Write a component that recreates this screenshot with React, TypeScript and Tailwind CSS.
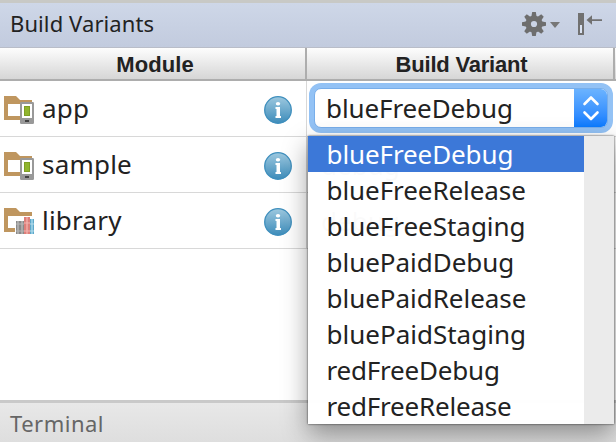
import React from "react";

const variants = [
  { name: "blueFreeDebug", tracking: "tracking-[-0.1px]" },
  { name: "blueFreeRelease", tracking: "tracking-[-0.07px]" },
  { name: "blueFreeStaging", tracking: "tracking-[-0.03px]" },
  { name: "bluePaidDebug", tracking: "tracking-[-0.03px]" },
  { name: "bluePaidRelease", tracking: "tracking-[-0.03px]" },
  { name: "bluePaidStaging", tracking: "tracking-[0px]" },
  { name: "redFreeDebug", tracking: "tracking-[-0.2px]" },
  { name: "redFreeRelease", tracking: "tracking-[-0.2px]" },
];

const modules = [
  { name: "app", kind: "phone" },
  { name: "sample", kind: "phone" },
  { name: "library", kind: "books" },
];

function ModuleIcon({ kind }: { kind: string }) {
  return (
    <svg width="32" height="32" viewBox="0 0 32 32" className="mt-[3px] shrink-0">
      <path d="M0 2h12l4 4h12v20H0z" fill="#bf965f" />
      <path d="M4 10h24v12H4z" fill="#fff" />
      {kind === "phone" ? (
        <g>
          <rect x="16" y="8" width="14" height="22" rx="1.2" fill="#999" />
          <rect x="18" y="10" width="10" height="14" fill="#fff" />
          <rect x="20" y="12" width="6" height="10" fill="#7f9f24" />
          <rect x="21" y="13" width="4" height="8" fill="#91b52e" />
          <rect x="21" y="26" width="4" height="2" fill="#444" />
        </g>
      ) : (
        <g>
          <path d="M11 14h8v-4h8v2h5v16H11z" fill="#fff" />
          <rect x="12" y="15" width="8" height="13" fill="#8a8a8a" />
          <path d="M13 15h2v13h-2zM17 15h2v13h-2z" fill="#aaa" />
          <path d="M12 18h8M12 25h8" stroke="#b5b5b5" />
          <rect x="20" y="11" width="6" height="17" fill="#dd7f7a" />
          <path d="M22 11h2v17h-2z" fill="#ed9f9a" />
          <path d="M20 17h6M20 25h6" stroke="#f2b4b0" />
          <rect x="26" y="13" width="4" height="15" fill="#5ea7c9" />
          <path d="M27 13h2v15h-2z" fill="#91cbe3" />
          <path d="M26 18h4M26 25h4" stroke="#b4dbea" />
        </g>
      )}
    </svg>
  );
}

function InfoIcon() {
  return (
    <svg width="28" height="28" viewBox="0 0 28 28" className="mt-[3px] ml-auto shrink-0">
      <defs>
        <linearGradient id="info" x1="0" y1="0" x2="0" y2="1">
          <stop offset="0" stopColor="#9dc8df" />
          <stop offset="1" stopColor="#3d8cba" />
        </linearGradient>
      </defs>
      <circle cx="14" cy="14" r="13.3" fill="url(#info)" stroke="#3f8fbd" strokeWidth="1.3" />
      <ellipse cx="14" cy="7.7" rx="2.2" ry="1.7" fill="#fff" />
      <path d="M11.500 11h4.500v9h1v2h-5.500v-2h1v-7h-1z" fill="#fff" />
    </svg>
  );
}

function Gear() {
  return (
    <svg width="24" height="24" viewBox="0 0 24 24">
      <g fill="#6e6e6e">
        {[0, 45, 90, 135].map((angle) => (
          <path key={angle} d="M10.200 0h3.600l.9 5v14l-.9 5h-3.600l-.9-5V5z" transform={`rotate(${angle} 12 12)`} />
        ))}
        <circle cx="12" cy="12" r="8.6" />
      </g>
      <circle cx="12" cy="12" r="3.1" fill="#cbd4e6" />
    </svg>
  );
}

export default function App() {
  return (
    <div className="relative flex h-[442px] w-[616px] flex-col overflow-hidden bg-white font-['Noto_Sans',sans-serif] text-[#222]">
      <header className="flex h-12 shrink-0 items-center border-t-[3px] border-b border-t-[#c8c9c6] border-b-[#b9bdc8] bg-linear-to-b from-[#ced7e8] to-[#c2cbde] pl-[10px]">
        <span className="-mt-[4px] text-[22px] leading-none tracking-[0.1px]">Build Variants</span>
        <div className="-mt-[2px] ml-auto flex items-center pr-[14px]">
          <Gear />
          <svg width="10" height="6" viewBox="0 0 10 6" className="mt-[2px] ml-[4px]">
            <path d="M0 0h10L5 6z" fill="#777" />
          </svg>
          <svg width="24" height="22" viewBox="0 0 24 22" className="ml-[18px]">
            <path d="M0 0h6v22H0z" fill="#717171" />
            <path d="M2 12h2v8H2z" fill="#dae2f1" />
            <path d="M8.500 7L14 2.200v4H24v1.800H14v3.800z" fill="#717171" />
          </svg>
        </div>
      </header>
      <div className="flex h-[33px] shrink-0 border-b-2 border-[#adadad] bg-linear-to-b from-[#fdfdfd] to-[#d6d6d6] font-['Liberation_Sans',sans-serif] text-[22px] leading-[33px] font-bold">
        <div className="w-[307px] border-r-2 border-[#adadad] pl-[5px] text-center tracking-[0.1px]">Module</div>
        <div className="w-[308px] border-r-2 border-[#adadad] pl-[3px] text-center tracking-[-0.2px]">Build Variant</div>
      </div>
      <main className="min-h-0 flex-1">
        {modules.map((module, index) => (
          <div key={module.name} className="flex h-14 border-b border-[#d8d8d8]">
            <div className="flex w-[307px] items-center border-r border-[#d8d8d8] pr-[14px] pl-1">
              <ModuleIcon kind={module.kind} />
              <span className="-mt-[2px] ml-[6px] text-[26px] leading-none tracking-[0.2px]">{module.name}</span>
              <InfoIcon />
            </div>
            {index === 0 ? (
              <div className="flex flex-1 pt-[2px] pl-[2px]">
                <div className="flex h-[50px] w-[304px] shrink-0 rounded-xl bg-[#93c2f5] p-[5px]">
                  <div className="flex h-10 w-[294px] shrink-0 items-center overflow-hidden rounded-[7px] border border-[#78aeea] bg-white">
                    <span className="pl-[11px] text-[26px] leading-none tracking-[-0.1px]">blueFreeDebug</span>
                    <span className="ml-auto flex h-full w-[33px] shrink-0 items-center justify-center bg-linear-to-b from-[#6bb3ff] to-[#087bff]">
                      <svg width="18" height="26" viewBox="0 0 18 26" fill="none" stroke="#fff" strokeWidth="2.6" strokeLinecap="round" strokeLinejoin="round">
                        <path d="M2.500 9L9 2.500 15.500 9M2.500 17.500L9 24l6.500-6.500" />
                      </svg>
                    </span>
                  </div>
                </div>
              </div>
            ) : (
              <div className="flex items-center pl-[14px] text-[26px] leading-none">debug</div>
            )}
          </div>
        ))}
      </main>
      <footer className="flex h-[42px] shrink-0 items-center border-t-[3px] border-[#c9c9c9] bg-linear-to-b from-[#e8e8e8] to-[#dedede] pl-[10px]">
        <span className="text-[22px] leading-none tracking-[0.5px] text-[#666]">Terminal</span>
      </footer>
      <div className="absolute top-[136px] left-[308px] flex h-[288px] w-[306px] bg-white/98 shadow-[0_0_2px_rgba(0,0,0,0.75),0_10px_24px_rgba(0,0,0,0.38)]">
        <div className="flex-1">
          {variants.map((variant, index) => (
            <div key={variant.name} className={`flex h-9 items-center pl-[18.5px] text-[26px] leading-none ${variant.tracking} ${index === 0 ? "bg-[#3c78d8] text-white" : ""}`}>
              {variant.name}
            </div>
          ))}
        </div>
        <div className="w-[30px] bg-[#ebebeb]" />
      </div>
    </div>
  );
}
